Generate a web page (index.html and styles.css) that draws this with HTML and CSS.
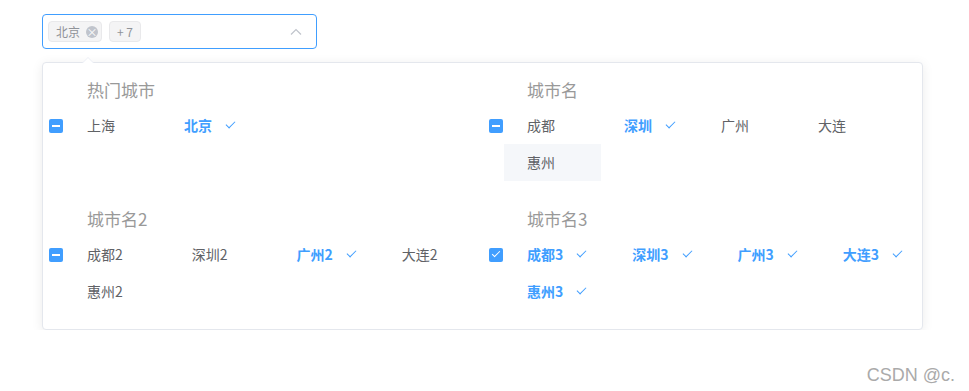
FILE: index.html
```html
<!DOCTYPE html>
<html lang="zh-CN">
<head>
  <meta charset="UTF-8">
  <title>城市选择</title>
  <link rel="stylesheet" href="styles.css">
</head>
<body>

  <div class="page">
    <div class="select">
      <span class="tag">北京<i class="tag-close">×</i></span>
      <span class="tag">+ 7</span>
      <svg class="select-arrow" width="12" height="12" viewBox="0 0 12 12">
        <polyline points="1,8.5 6,3.5 11,8.5" fill="none" stroke="#c0c4cc" stroke-width="1.2"/>
      </svg>
    </div>

    <div class="dropdown">
      <div class="dropdown-arrow"></div>

      <div class="group">
        <div class="group-title">热门城市</div>
        <div class="group-check"><span class="checkbox is-indeterminate"></span></div>
        <ul class="options">
          <li>上海<i class="check"></i></li>
          <li class="selected">北京<i class="check"></i></li>
        </ul>
      </div>

      <div class="group">
        <div class="group-title">城市名</div>
        <div class="group-check"><span class="checkbox is-indeterminate"></span></div>
        <ul class="options">
          <li>成都<i class="check"></i></li>
          <li class="selected">深圳<i class="check"></i></li>
          <li>广州<i class="check"></i></li>
          <li>大连<i class="check"></i></li>
          <li class="hover">惠州<i class="check"></i></li>
        </ul>
      </div>

      <div class="group">
        <div class="group-title">城市名2</div>
        <div class="group-check"><span class="checkbox is-indeterminate"></span></div>
        <ul class="options">
          <li>成都2<i class="check"></i></li>
          <li>深圳2<i class="check"></i></li>
          <li class="selected">广州2<i class="check"></i></li>
          <li>大连2<i class="check"></i></li>
          <li>惠州2<i class="check"></i></li>
        </ul>
      </div>

      <div class="group">
        <div class="group-title">城市名3</div>
        <div class="group-check"><span class="checkbox is-checked"></span></div>
        <ul class="options">
          <li class="selected">成都3<i class="check"></i></li>
          <li class="selected">深圳3<i class="check"></i></li>
          <li class="selected">广州3<i class="check"></i></li>
          <li class="selected">大连3<i class="check"></i></li>
          <li class="selected">惠州3<i class="check"></i></li>
        </ul>
      </div>
    </div>
  </div>

  <div class="watermark">CSDN @c.</div>

</body>
</html>
```

FILE: styles.css
```css
* {
  box-sizing: border-box;
}
body {
  margin: 0;
  font-family: "Noto Sans CJK SC", "Liberation Sans", sans-serif;
  color: #606266;
  background: #fff;
}
.page {
  padding: 14px 0 0 42px;
}
.select {
  display: flex;
  align-items: center;
  gap: 7px;
  width: 275px;
  height: 35px;
  padding: 0 14px 0 5px;
  border: 1px solid #409eff;
  border-radius: 4px;
}
.tag {
  display: inline-flex;
  align-items: center;
  height: 21px;
  padding: 0 7px;
  font-size: 12px;
  color: #909399;
  background: #f4f4f5;
  border: 1px solid #e9e9eb;
  border-radius: 4px;
}
.tag:first-child {
  padding-right: 3px;
}
.tag-close {
  display: inline-flex;
  align-items: center;
  justify-content: center;
  width: 12px;
  height: 12px;
  margin-left: 6px;
  border-radius: 50%;
  background: #c0c4cc;
  color: #fff;
  font-style: normal;
  font-size: 11px;
  line-height: 12px;
}
.select-arrow {
  margin-left: auto;
}
.dropdown {
  position: relative;
  display: grid;
  grid-template-columns: 440px 1fr;
  width: 881px;
  margin-top: 13px;
  padding-bottom: 8px;
  border: 1px solid #e4e7ed;
  border-radius: 4px;
  box-shadow: 0 2px 12px rgba(0, 0, 0, 0.08);
  background: #fff;
}
.dropdown-arrow {
  position: absolute;
  top: -6px;
  left: 39px;
  border-style: solid;
  border-width: 0 6px 6px;
  border-color: transparent transparent #ebeef5;
}
.dropdown-arrow::after {
  content: "";
  position: absolute;
  top: 1px;
  left: -6px;
  border-style: solid;
  border-width: 0 6px 6px;
  border-color: transparent transparent #fff;
}
.group {
  display: grid;
  grid-template-columns: 21px max-content;
  grid-template-areas:
    ". title"
    "box options";
  align-content: start;
  padding: 12px 0 11px;
}
.group-title {
  grid-area: title;
  padding-left: 23px;
  height: 32px;
  line-height: 30px;
  font-size: 17px;
  color: #999;
}
.group-check {
  grid-area: box;
  display: flex;
  align-items: center;
  height: 37px;
  padding-left: 6px;
}
.checkbox {
  position: relative;
  width: 14px;
  height: 14px;
  border-radius: 2px;
  background: #409eff;
}
.checkbox.is-indeterminate::after {
  content: "";
  position: absolute;
  left: 3px;
  top: 6px;
  width: 8px;
  height: 2px;
  background: #fff;
}
.checkbox.is-checked::after {
  content: "";
  position: absolute;
  left: 4.5px;
  top: 1.5px;
  width: 3px;
  height: 7px;
  border: 1px solid #fff;
  border-top: 0;
  border-left: 0;
  transform: rotate(45deg);
}
.options {
  grid-area: options;
  display: grid;
  grid-template-columns: repeat(4, max-content);
  margin: 0;
  padding: 0;
  list-style: none;
}
.options li {
  display: flex;
  align-items: center;
  height: 37px;
  padding: 0 22px 2px 23px;
  font-size: 14px;
  color: #606266;
  white-space: nowrap;
}
.options li.hover {
  background: #f5f7fa;
}
.options li.selected {
  color: #409eff;
  font-weight: bold;
}
.check {
  width: 12px;
  height: 12px;
  margin-left: 12px;
}
.selected .check::after {
  content: "";
  display: block;
  width: 4px;
  height: 8px;
  margin: 0 0 0 4px;
  border: 1.4px solid #409eff;
  border-top: 0;
  border-left: 0;
  transform: rotate(45deg);
}
.watermark {
  position: absolute;
  right: 14px;
  bottom: 5px;
  font-family: "Liberation Sans", Arial, sans-serif;
  font-size: 18px;
  color: #aaa;
}
```
